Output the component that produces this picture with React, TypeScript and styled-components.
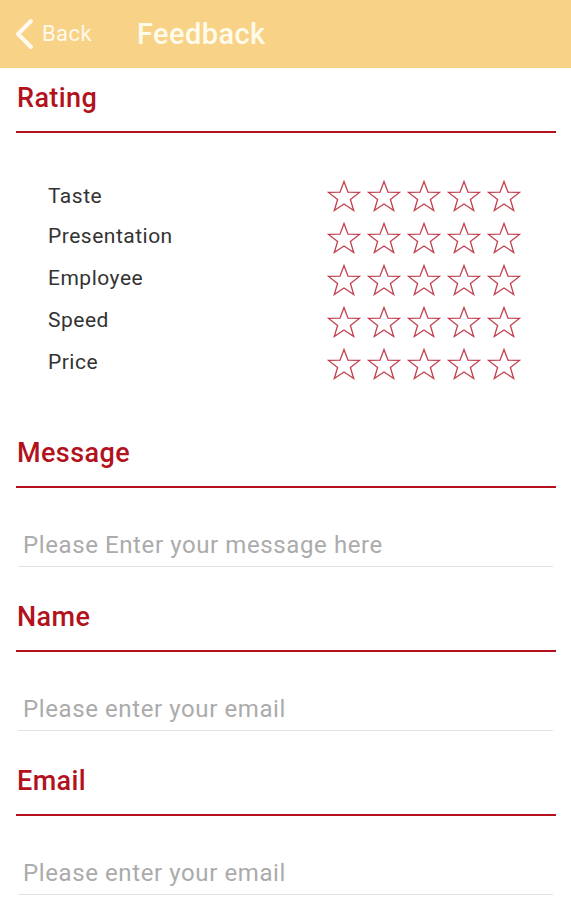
import React from "react";
import styled, { createGlobalStyle } from "styled-components";

const RED = "#b3121d";

const GlobalStyle = createGlobalStyle`
  html, body {
    margin: 0;
    padding: 0;
    background: #ffffff;
    font-family: Roboto, "Liberation Sans", Arial, sans-serif;
  }
`;

const ratings = ["Taste", "Presentation", "Employee", "Speed", "Price"];

const fields = [
  { title: "Message", placeholder: "Please Enter your message here" },
  { title: "Name", placeholder: "Please enter your email" },
  { title: "Email", placeholder: "Please enter your email" },
];

function Star() {
  return (
    <svg width="34" height="32" viewBox="0 0 34 32">
      <polygon
        points="17,1.5 21,12.2 32.5,12.4 23.4,19.4 26.7,30.5 17,24 7.3,30.5 10.6,19.4 1.5,12.4 13,12.2"
        fill="none"
        stroke="#c2404e"
        strokeWidth="1.3"
        strokeLinejoin="miter"
      />
    </svg>
  );
}

function Feedback() {
  return (
    <Page>
      <GlobalStyle />
      <TopBar>
        <BackButton>
          <svg width="22" height="32" viewBox="0 0 22 32">
            <polyline
              points="17,3 4,16 17,29"
              fill="none"
              stroke="#fffaf0"
              strokeWidth="4"
              strokeLinecap="round"
              strokeLinejoin="round"
            />
          </svg>
          <span>Back</span>
        </BackButton>
        <Title>Feedback</Title>
      </TopBar>

      <SectionTitle>Rating</SectionTitle>
      <RatingList>
        {ratings.map((r, i) => (
          <RatingRow key={r}>
            <RatingLabel $first={i === 0}>{r}</RatingLabel>
            <Stars>
              {[0, 1, 2, 3, 4].map((s) => (
                <Star key={s} />
              ))}
            </Stars>
          </RatingRow>
        ))}
      </RatingList>

      {fields.map((f) => (
        <div key={f.title}>
          <SectionTitle>{f.title}</SectionTitle>
          <TextInput type="text" placeholder={f.placeholder} />
        </div>
      ))}
      <BottomEdge />
    </Page>
  );
}

const Page = styled.div`
  width: 571px;
  height: 900px;
  overflow: hidden;
  display: flex;
  flex-direction: column;
  background: #fff;
`;

const TopBar = styled.div`
  height: 68px;
  background: #f7d287;
  display: flex;
  align-items: center;
  padding-left: 14px;
  flex-shrink: 0;
`;

const BackButton = styled.div`
  display: flex;
  align-items: center;
  gap: 6px;
  color: #fff9ec;
  font-size: 22px;
  letter-spacing: 0.4px;
  width: 123px;
  span {
    margin-top: -2px;
  }
`;

const Title = styled.div`
  color: #fffbea;
  font-size: 29px;
  font-weight: 500;
  letter-spacing: 0.4px;
`;

const SectionTitle = styled.div`
  margin: 0 15px 0 16px;
  padding: 14px 1px 17px;
  line-height: 32px;
  font-size: 27px;
  font-weight: 500;
  letter-spacing: 0.4px;
  color: ${RED};
  border-bottom: 2px solid ${RED};
  flex-shrink: 0;
`;

const RatingList = styled.div`
  display: flex;
  flex-direction: column;
  padding: 42px 0 38px 48px;
  flex-shrink: 0;
`;

const RatingRow = styled.div`
  height: 42px;
  display: flex;
  align-items: center;
  justify-content: space-between;
  padding-right: 50px;
`;

const RatingLabel = styled.div<{ $first?: boolean }>`
  font-size: 21px;
  letter-spacing: 0.5px;
  color: #333333;
  margin-top: ${(p) => (p.$first ? "0" : "-5px")};
`;

const Stars = styled.div`
  display: flex;
  gap: 6px;
`;

const TextInput = styled.input`
  display: block;
  box-sizing: border-box;
  width: 535px;
  margin: 42px 18px 20px;
  padding: 0 0 6px 5px;
  height: 37px;
  border: none;
  border-bottom: 1px solid #e3e3e3;
  outline: none;
  font-family: Roboto, "Liberation Sans", Arial, sans-serif;
  font-size: 24px;
  letter-spacing: 0.6px;
  line-height: 30px;
  color: #333;
  background: transparent;
  &::placeholder {
    color: #ababab;
  }
`;

const BottomEdge = styled.div`
  margin-top: auto;
  height: 2px;
  background: #1a1a1a;
  flex-shrink: 0;
`;

export default Feedback;
